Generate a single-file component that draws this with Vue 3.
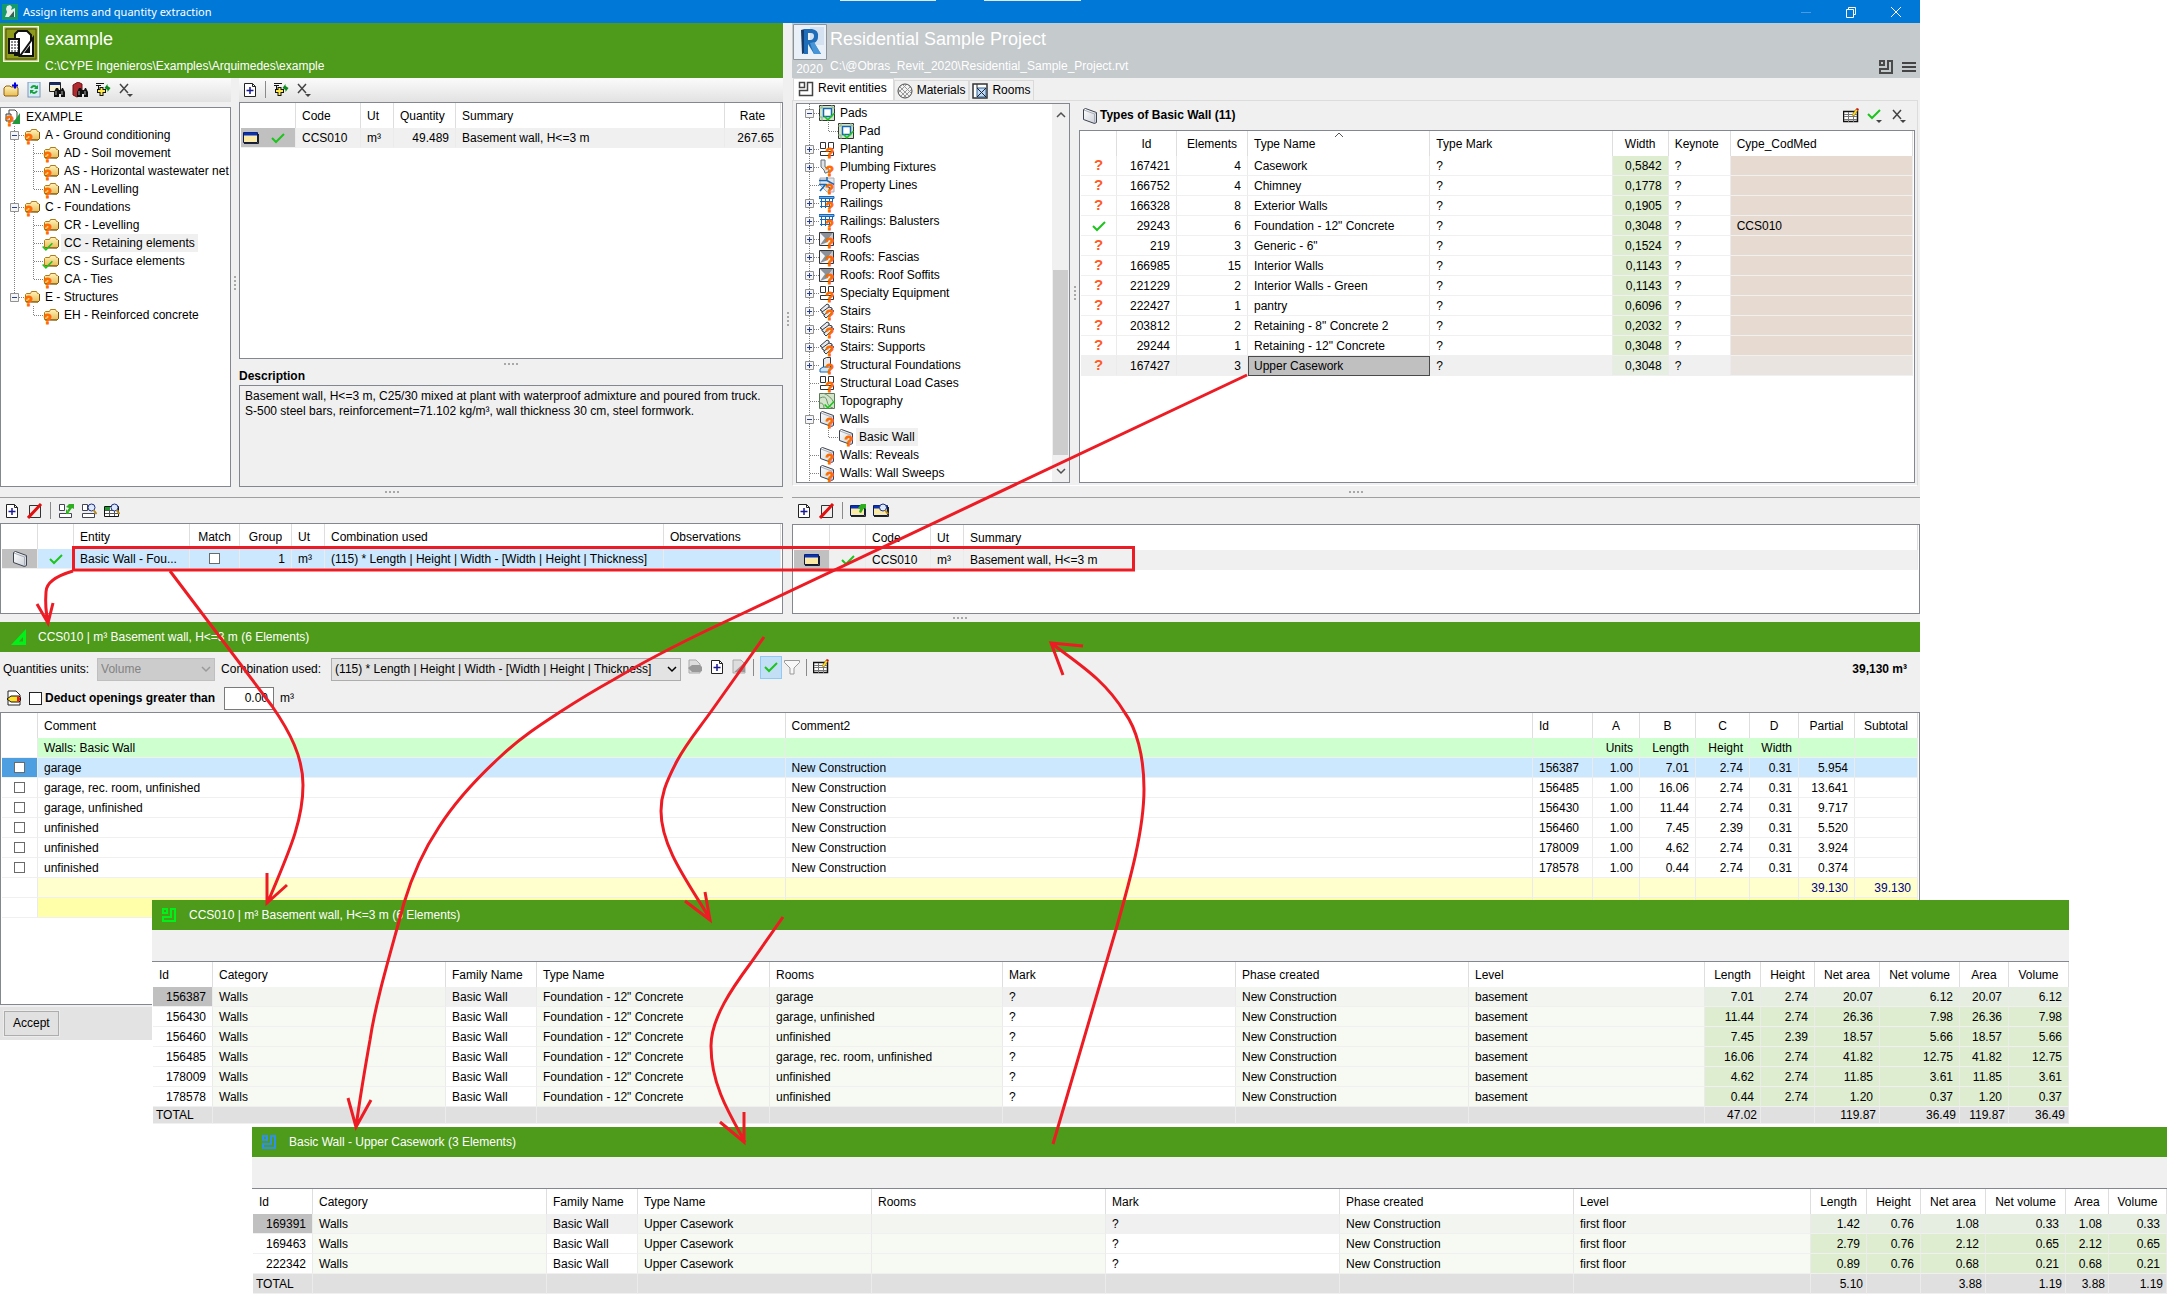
<template>
  <div class="desktop">
    <!-- icon sheet -->
    <svg class="icon-sheet" aria-hidden="true">
      <defs>
        <linearGradient id="folder-fill" x1="0" y1="0" x2="0" y2="1">
          <stop offset="0" stop-color="#fff3b8" />
          <stop offset="1" stop-color="#e8bc55" />
        </linearGradient>
        <linearGradient id="wall-fill" x1="0" y1="0" x2="1" y2="1">
          <stop offset="0" stop-color="#ffffff" />
          <stop offset="1" stop-color="#c9ced6" />
        </linearGradient>
        <symbol id="i-folder" viewBox="0 0 16 16">
          <path d="M1.500 12.500v-7l1-1h4l1-2h5l1 2h1l1 1v6l-1.500 1.500z" fill="url(#folder-fill)" stroke="#b07a18" />
          <path d="M2 13h12l1.500-1.500V5" fill="none" stroke="#7a5208" />
        </symbol>
        <symbol id="i-badge-q" viewBox="0 0 16 16">
          <text x="3" y="15" class="badge-text">?</text>
        </symbol>
        <symbol id="i-tick" viewBox="0 0 16 16">
          <path d="M2 8l4 4 8-8" fill="none" stroke="#1dc41d" stroke-width="2" />
        </symbol>
        <symbol id="i-folder-new" viewBox="0 0 16 16">
          <path d="M1 13V6l2-2h4l1 1h6l1 1v7l-1 1H2z" fill="url(#folder-fill)" stroke="#8f5f0c" />
          <path d="M9 3.500h6M12 .5v6" stroke="#0000e0" stroke-width="2" />
        </symbol>
        <symbol id="i-refresh" viewBox="0 0 16 16">
          <rect x="2" y="0" width="12" height="15" fill="#d8ecf8" stroke="#7b98b8" />
          <path d="M5 6q3-4 6 0M11 9q-3 4-6 0" fill="none" stroke="#14a03a" stroke-width="2" />
          <path d="M12 3v4H8zM4 12V8h4z" fill="#14a03a" />
        </symbol>
        <symbol id="i-find-item" viewBox="0 0 16 16">
          <path d="M.5.500h11v9H.5z" fill="#f4f0d0" stroke="#222" />
          <path d="M1 2h10" stroke="#0b2a8a" stroke-width="2" />
          <path d="M5 15v-5l2-4h2l1 2h2l1-2h1l2 4v5h-4v-3h-2v3z" fill="#111" />
          <path d="M7 9v4M13 9v4" stroke="#aaa" />
        </symbol>
        <symbol id="i-find-book" viewBox="0 0 16 16">
          <path d="M1 3l5-3 4 2v10l-5 3-4-2z" fill="#b02a30" stroke="#701015" />
          <path d="M5 15v-5l2-4h2l1 2h2l1-2h1l2 4v5h-4v-3h-2v3z" fill="#111" />
          <path d="M7 9v4M13 9v4" stroke="#aaa" />
        </symbol>
        <symbol id="i-insert" viewBox="0 0 16 16">
          <path d="M1 1.500h8M1 3.500h5M3.500 4v3" stroke="#111" />
          <path d="M2 9h9M6.500 5v9" stroke="#111" stroke-width="4" />
          <path d="M3 9h7M6.500 6v7" stroke="#ffe84a" stroke-width="2" />
          <path d="M9.500 6l3-4v2l3 2-3 4v-2z" fill="#0a8a1a" />
        </symbol>
        <symbol id="i-cross-menu" viewBox="0 0 16 16">
          <path d="M2 2l8 9M10 2l-8 9" stroke="#444" stroke-width="1.500" />
          <path d="M9 12h6l-3 3z" fill="#444" />
        </symbol>
        <symbol id="i-tick-menu" viewBox="0 0 16 16">
          <path d="M1 6l4 4 8-8" fill="none" stroke="#1dc41d" stroke-width="2" />
          <path d="M9 12h6l-3 3z" fill="#444" />
        </symbol>
        <symbol id="i-doc-new" viewBox="0 0 16 16">
          <path d="M2.500 1.500h8l3 3v10h-11z" fill="#fff" stroke="#222" />
          <path d="M10.500 1.500v3h3" fill="none" stroke="#222" />
          <path d="M4.500 8.500h7M8 5v7" stroke="#1a1a90" stroke-width="1.500" />
        </symbol>
        <symbol id="i-doc-off" viewBox="0 0 16 16">
          <path d="M2.500 2.500h11v12h-11z" fill="#eee" stroke="#333" />
          <path d="M1 15L14 1" stroke="#e01010" stroke-width="3" />
        </symbol>
        <symbol id="i-doc-grey" viewBox="0 0 16 16">
          <path d="M2 1h8l4 4v9H2z" fill="#ddd" stroke="#aaa" />
          <path d="M1 15L14 3v10H3z" fill="#999" />
        </symbol>
        <symbol id="i-pencil-grey" viewBox="0 0 16 16">
          <path d="M2 1h7l4 4v9H2z" fill="#ddd" stroke="#aaa" />
          <path d="M1 9l4-3h8l2 2v4l-2 1H5z" fill="#999" />
        </symbol>
        <symbol id="i-blocks" viewBox="0 0 16 16">
          <path d="M1.500 1.500h5v6h-5zM9.500 1.500h5v6h-5zM1.500 10.500h13v4h-13z" fill="#fff" stroke="#333" />
        </symbol>
        <symbol id="i-blocks-sync" viewBox="0 0 16 16">
          <path d="M1.500 1.500h5v6h-5zM1.500 10.500h12v4h-12z" fill="#fff" stroke="#445" />
          <path d="M8 4l3-3h5v5l-2-1-3 4-2-1 2-3zM8 6v5h4" fill="#2fae1f" />
        </symbol>
        <symbol id="i-blocks-find" viewBox="0 0 16 16">
          <path d="M1.500 1.500h5v6h-5zM1.500 10.500h12v4h-12z" fill="#fff" stroke="#445" />
          <circle cx="10.500" cy="4.500" r="3.500" fill="#dce9ff" stroke="#1d2f80" />
          <path d="M12.500 7l3 4" stroke="#b58a20" stroke-width="2" />
        </symbol>
        <symbol id="i-grid-find" viewBox="0 0 16 16">
          <path d="M.5 3.500h14v10H.5z" fill="#fff" stroke="#111" />
          <path d="M1 7.500h14M1 10.500h14M5.500 4v9M10.500 4v9" stroke="#555" />
          <path d="M1 4h5v3H1z" fill="#1a9a2a" />
          <circle cx="10.500" cy="4.500" r="3.500" fill="#dce9ff" stroke="#1d2f80" />
          <path d="M12.500 7l3 4" stroke="#b58a20" stroke-width="2" />
        </symbol>
        <symbol id="i-item" viewBox="0 0 16 16">
          <path d="M.5 2.500h14v10H.5z" fill="#fbe9a6" stroke="#0a1a50" />
          <path d="M1 4h13" stroke="#0a32b8" stroke-width="3" />
          <path d="M1 13.500h14.500V4" fill="none" stroke="#222" />
        </symbol>
        <symbol id="i-item-sync" viewBox="0 0 16 16">
          <use href="#i-item" />
          <path d="M8 5l3-4h5v5l-2-1-3 5-2-1 1-3z" fill="#2fae1f" />
        </symbol>
        <symbol id="i-item-find" viewBox="0 0 16 16">
          <use href="#i-item" />
          <circle cx="10" cy="4.500" r="3.500" fill="#dce9ff" stroke="#1d2f80" />
          <path d="M12 7l3 4" stroke="#b58a20" stroke-width="2" />
        </symbol>
        <symbol id="i-wall" viewBox="0 0 16 16">
          <path d="M1.500 1.500l2-1 11 4v10l-2 1-11-4z" fill="url(#wall-fill)" stroke="#3c4350" />
          <path d="M2 2l10.500 4 1.500-1M12.500 6v9" fill="none" stroke="#a8aeb8" />
        </symbol>
        <symbol id="i-pad" viewBox="0 0 16 16">
          <path d="M.5.500h15v15H.5z" fill="#cfe6c8" stroke="#333" />
          <path d="M3 0v3H0M13 0q-1 3 3 3M0 12h3v4" fill="none" stroke="#86b07e" />
          <path d="M4.500 3.500h8v8h-8z" fill="#fff" stroke="#1667b5" stroke-width="1.500" />
        </symbol>
        <symbol id="i-plumbing" viewBox="0 0 16 16">
          <path d="M2 1h4v7l4 2q1 3-3 4H6L5 11 2 8z" fill="#dfe2e6" stroke="#666c76" />
        </symbol>
        <symbol id="i-property" viewBox="0 0 16 16">
          <path d="M1 1h14v14H8L1 8z" fill="#e4e6ea" stroke="#a8adb5" />
          <path d="M0 3.500h8l7 4M0 7.500h7l5 5M8 0v4M6 8L1 14" fill="none" stroke="#1667b5" stroke-width="1.500" />
        </symbol>
        <symbol id="i-railing" viewBox="0 0 16 16">
          <path d="M0 1.500h15v2H0z" fill="#6fb0e8" stroke="#1667b5" />
          <path d="M1 6.500h13M1 11.500h11M2.500 4v9M6.500 4v9M10.500 4v9M13.500 4v4" fill="none" stroke="#1667b5" />
        </symbol>
        <symbol id="i-roof" viewBox="0 0 16 16">
          <path d="M.5 1.500h14v13H.5z" fill="#f5f6f8" stroke="#333" />
          <path d="M1 2l5 5h4l4-5zM1 14l5-7h3v4z" fill="#8b919b" />
          <path d="M14 2l-4 5 1 4 3 3z" fill="#c3c8d0" />
        </symbol>
        <symbol id="i-stairs" viewBox="0 0 16 16">
          <path d="M1 7l7-6 2 1v2l3 1v2l2 1-8 7-2-2v-2l-2-1v-2z" fill="#e8eaee" stroke="#333a45" />
          <path d="M3 9l7-5M5 12l8-6" stroke="#333a45" />
        </symbol>
        <symbol id="i-foundation" viewBox="0 0 16 16">
          <path d="M4.500 12V2l3-1.500h4V10" fill="#e8eaee" stroke="#333a45" />
          <path d="M1 12l3-2h9l-3 5H1z" fill="#cfe4f6" stroke="#1667b5" />
        </symbol>
        <symbol id="i-topo" viewBox="0 0 16 16">
          <path d="M.5.500h15v15H.5z" fill="#d3e6cc" stroke="#5d7a58" />
          <path d="M1 5q6-3 7 3t6 7M4 0q8 3 11 10M1 10q4 0 4 5" fill="none" stroke="#6f9168" />
        </symbol>
        <symbol id="i-entities" viewBox="0 0 16 16">
          <path d="M1.500 1.500h5v5h-5zM9.500 1.500h5v13h-13v-5h8z" fill="#fff" stroke="#444" stroke-width="1.500" />
        </symbol>
        <symbol id="i-material" viewBox="0 0 16 16">
          <circle cx="8" cy="8" r="7" fill="#f2f2f2" stroke="#444" />
          <path d="M3 4l9 9M6 2l8 8M2 7l7 7M4 13l9-9M2 9l7-7M7 14l7-7" stroke="#999" />
        </symbol>
        <symbol id="i-room" viewBox="0 0 16 16">
          <path d="M1 1h14v14H1z" fill="#fff" stroke="#333" stroke-width="1.500" />
          <path d="M5 5h9v9H5z" fill="#bcd9f5" stroke="#35618c" />
          <path d="M5 5l9 9M14 5l-9 9" stroke="#223" />
          <path d="M5 1v4" stroke="#333" />
        </symbol>
        <symbol id="i-plan" viewBox="0 0 16 16">
          <path d="M2 2h4v4H2zM10 2h4v12H2V10h8z" fill="none" stroke="currentColor" stroke-width="2" />
        </symbol>
        <symbol id="i-menu" viewBox="0 0 16 16">
          <path d="M1 4h14M1 8h14M1 12h14" stroke="#444" stroke-width="2" />
        </symbol>
        <symbol id="i-grid-edit" viewBox="0 0 16 16">
          <path d="M.5 3.500h14v10H.5z" fill="#fff" stroke="#111" stroke-width="1.500" />
          <path d="M1 6.500h13M1 8.500h13M1 11.500h13M5.500 4v10M10.500 4v10" stroke="#777" />
          <path d="M9 7l4-6 2 1-4 6z" fill="#ffe02a" stroke="#7a5a00" stroke-width=".5" />
          <path d="M13 1l1-1 2 1-1 2z" fill="#d01010" />
        </symbol>
        <symbol id="i-funnel" viewBox="0 0 16 16">
          <path d="M.5 1.500h15v2L10 9v6H6V9L.5 3.500z" fill="#f8f8f8" stroke="#999" />
        </symbol>
        <symbol id="i-pencil-doc" viewBox="0 0 16 16">
          <path d="M2 1h8l4 4v10H2z" fill="#fff" stroke="#222" />
          <path d="M1 9l4-3h8l1.500 1.500v3L13 12H5z" fill="#ffe02a" stroke="#111" />
          <path d="M11 6.500h2l1 1.500v2l-1 1.500h-2z" fill="#e02020" />
        </symbol>
        <symbol id="i-triangle" viewBox="0 0 16 16">
          <path fill-rule="evenodd" d="M0 16L15 0v16zM8 12.500h4V8z" fill="#00f01a" />
        </symbol>
        <symbol id="i-project" viewBox="0 0 16 16">
          <path d="M4 1h6l2 2v9H4z" fill="#fff" stroke="#444" />
          <path d="M1 5h5v7H1z" fill="#ddd" stroke="#444" />
          <path d="M7 15L15 4v11z" fill="#229a3c" />
        </symbol>
        <symbol id="i-chevron" viewBox="0 0 16 16">
          <path d="M4 6l4 4 4-4" fill="none" stroke="currentColor" stroke-width="1.500" />
        </symbol>
      </defs>
    </svg>

    <main class="main-window">
      <header class="title-bar">
        <svg class="app-icon" viewBox="0 0 16 16" aria-hidden="true">
          <path d="M0 0h16v16H0z" fill="#159a6c" />
          <path d="M5 2l3-1 2 2-1 3 4-2v9H3l2-5-1-3z" fill="#e8efe9" />
          <path d="M7 13l5-6v6z" fill="#3d5d50" />
        </svg>
        <span class="title-text">Assign items and quantity extraction</span>
        <button class="win-btn" aria-label="Minimize">
          <svg viewBox="0 0 12 12"><path d="M1 6.500h10" stroke="#4a9be2" /></svg>
        </button>
        <button class="win-btn" aria-label="Restore">
          <svg viewBox="0 0 12 12"><path d="M1.500 3.500h7v8h-7zM3.500 3V1.500h7v7H9" fill="none" stroke="#fff" /></svg>
        </button>
        <button class="win-btn" aria-label="Close">
          <svg viewBox="0 0 12 12"><path d="M1 1l10 10M11 1L1 11" stroke="#fff" /></svg>
        </button>
      </header>

      <div class="workspace">
        <!-- bill of quantities side -->
        <section class="side">
          <header class="side-header green">
            <svg class="job-logo" viewBox="0 0 36 36" aria-hidden="true">
              <path d="M.5.500h35v35H.5z" fill="#8d9a1c" stroke="#f2f2e0" stroke-width="2" />
              <path d="M3 3h30v30H3z" fill="none" stroke="#4b520c" />
              <path d="M12 8l3-3h9l4 4v20H12z" fill="#fff" stroke="#111" stroke-width="2" />
              <path d="M6 13h10v14H6z" fill="#fff" stroke="#111" stroke-width="2" />
              <path d="M8 16h7M8 19h7M8 22h7M8 25h7" stroke="#111" stroke-dasharray="2 1" />
              <path fill-rule="evenodd" d="M17 30L30 12v18zM23 26h3v-4z" fill="#fff" stroke="#111" stroke-width="2" />
            </svg>
            <div class="side-title">
              <h1>example</h1>
              <p>C:\CYPE Ingenieros\Examples\Arquimedes\example</p>
            </div>
          </header>

          <div class="job-panels">
            <div class="tree-column">
              <div class="toolbar shaded">
                <button v-for="b in treeTools" :key="b.icon" :aria-label="b.label">
                  <svg class="icon"><use :href="'#i-' + b.icon" /></svg>
                </button>
              </div>
              <ul class="tree job-tree">
                <li v-for="node in jobTree" :key="node.text">
                  <svg v-for="(g, i) in node.guides" :key="i" class="guide" viewBox="0 0 19 18">
                    <path :d="guidePaths[g]" class="dots" />
                    <g v-if="g.startsWith('open')">
                      <path d="M5.500 5.500h8v8h-8z" fill="#f5f5f5" stroke="#919191" />
                      <path d="M7 9.500h5" stroke="#2b3f8f" />
                    </g>
                  </svg>
                  <span class="tree-icon">
                    <svg class="icon"><use :href="'#i-' + node.icon" /></svg>
                    <svg class="badge left"><use :href="node.ok ? '#i-tick' : '#i-badge-q'" /></svg>
                  </span>
                  <span class="tree-label" :class="{ current: node.current }">{{ node.text }}</span>
                </li>
              </ul>
            </div>

            <div class="v-split narrow"><i class="grip vertical"></i></div>

            <div class="list-column">
              <div class="toolbar shaded">
                <button aria-label="New item"><svg class="icon"><use href="#i-doc-new" /></svg></button>
                <i class="sep"></i>
                <button aria-label="Insert"><svg class="icon"><use href="#i-insert" /></svg></button>
                <button aria-label="Remove"><svg class="icon"><use href="#i-cross-menu" /></svg></button>
              </div>
              <div class="box items-box">
                <table class="grid">
                  <colgroup>
                    <col v-for="(w, i) in [55, 65, 33, 62, 0, 56]" :key="i" :style="colWidth(w)" />
                  </colgroup>
                  <thead>
                    <tr><th></th><th>Code</th><th>Ut</th><th>Quantity</th><th>Summary</th><th class="mid">Rate</th></tr>
                  </thead>
                  <tbody>
                    <tr class="current">
                      <td class="gutter pair">
                        <svg class="icon"><use href="#i-item" /></svg>
                        <svg class="icon"><use href="#i-tick" /></svg>
                      </td>
                      <td>CCS010</td><td>m³</td><td class="num">49.489</td><td>Basement wall, H&lt;=3 m</td><td class="num">267.65</td>
                    </tr>
                  </tbody>
                </table>
              </div>
              <div class="h-split"><i class="grip"></i></div>
              <label class="desc-label" for="description">Description</label>
              <textarea id="description" class="description" readonly :value="description"></textarea>
            </div>
          </div>

          <div class="h-split lower"><i class="grip"></i></div>

          <div class="toolbar lined">
            <button aria-label="New entity"><svg class="icon"><use href="#i-doc-new" /></svg></button>
            <button aria-label="Delete entity"><svg class="icon"><use href="#i-doc-off" /></svg></button>
            <i class="sep"></i>
            <button aria-label="Update"><svg class="icon"><use href="#i-blocks-sync" /></svg></button>
            <button aria-label="View elements"><svg class="icon"><use href="#i-blocks-find" /></svg></button>
            <button aria-label="View quantities"><svg class="icon"><use href="#i-grid-find" /></svg></button>
          </div>
          <div class="box link-box">
            <table class="grid">
              <colgroup>
                <col v-for="(w, i) in [36, 36, 116, 50, 52, 33, 339, 0]" :key="i" :style="colWidth(w)" />
              </colgroup>
              <thead>
                <tr>
                  <th></th><th></th><th>Entity</th><th class="mid">Match</th><th class="mid">Group</th><th>Ut</th>
                  <th>Combination used</th><th>Observations</th>
                </tr>
              </thead>
              <tbody>
                <tr class="selected">
                  <td class="gutter"><svg class="icon"><use href="#i-wall" /></svg></td>
                  <td class="mid"><svg class="icon"><use href="#i-tick" /></svg></td>
                  <td>Basic Wall - Fou...</td>
                  <td class="mid"><input type="checkbox" aria-label="Match" /></td>
                  <td class="num">1</td>
                  <td>m³</td>
                  <td>{{ combination }}</td>
                  <td></td>
                </tr>
              </tbody>
            </table>
          </div>
        </section>

        <div class="v-split"><i class="grip vertical"></i></div>

        <!-- Revit model side -->
        <section class="side">
          <header class="side-header grey">
            <div class="revit-logo">
              <svg viewBox="0 0 34 36" aria-hidden="true">
                <path d="M.5.500h33v35H.5z" fill="#e9f0f8" stroke="#8c9296" />
                <path d="M17 3h14v18H17z" fill="#d3e1f0" />
                <path d="M8 6l4-1v24l-3 1z" fill="#133c6c" />
                <path fill-rule="evenodd" d="M11 5h8q7 1 6 8 0 4-4 6l7 11h-7l-6-10v10h-4zM15 9v7h3q3-1 3-4t-3-3z" fill="#1f6cb8" />
                <path d="M17 19l4-1 7 12h-7z" fill="#4795d6" />
              </svg>
              <span>2020</span>
            </div>
            <div class="side-title">
              <h1>Residential Sample Project</h1>
              <p>C:\@Obras_Revit_2020\Residential_Sample_Project.rvt</p>
            </div>
            <div class="header-tools">
              <button aria-label="Floor plan"><svg class="icon"><use href="#i-plan" /></svg></button>
              <button aria-label="Menu"><svg class="icon"><use href="#i-menu" /></svg></button>
            </div>
          </header>

          <nav class="tabs">
            <button v-for="(t, i) in tabs" :key="t.text" :class="{ active: i === 0 }">
              <svg class="icon"><use :href="'#i-' + t.icon" /></svg>{{ t.text }}
            </button>
          </nav>

          <div class="tab-page">
            <div class="entity-box">
              <ul class="tree entity-tree">
                <li v-for="node in entityTree" :key="node.text">
                  <svg v-for="(g, i) in node.guides" :key="i" class="guide" viewBox="0 0 19 18">
                    <path :d="guidePaths[g]" class="dots" />
                    <g v-if="g.startsWith('open') || g === 'closed'">
                      <path d="M5.500 5.500h8v8h-8z" fill="#f5f5f5" stroke="#919191" />
                      <path :d="g === 'closed' ? 'M7 9.500h5M9.500 7v5' : 'M7 9.500h5'" stroke="#2b3f8f" />
                    </g>
                  </svg>
                  <span class="tree-icon">
                    <svg class="icon"><use :href="'#i-' + node.icon" /></svg>
                    <svg class="badge right"><use :href="node.ok ? '#i-tick' : '#i-badge-q'" /></svg>
                  </span>
                  <span class="tree-label" :class="{ current: node.current }">{{ node.text }}</span>
                </li>
              </ul>
              <div class="scrollbar">
                <svg class="icon flip"><use href="#i-chevron" /></svg>
                <i class="thumb"></i>
                <svg class="icon"><use href="#i-chevron" /></svg>
              </div>
            </div>

            <div class="v-split"><i class="grip vertical"></i></div>

            <div class="types-column">
              <div class="types-header">
                <svg class="icon"><use href="#i-wall" /></svg>
                <h2>Types of Basic Wall (11)</h2>
                <button aria-label="Edit table"><svg class="icon"><use href="#i-grid-edit" /></svg></button>
                <button aria-label="Assign"><svg class="icon"><use href="#i-tick-menu" /></svg></button>
                <button aria-label="Remove"><svg class="icon"><use href="#i-cross-menu" /></svg></button>
              </div>
              <div class="box types-box">
                <table class="grid">
                  <colgroup>
                    <col v-for="(w, i) in [36, 60, 71, 0, 0, 56, 62, 0]" :key="i" :style="colWidth(w)" />
                  </colgroup>
                  <thead>
                    <tr>
                      <th></th><th class="mid">Id</th><th class="mid">Elements</th><th class="sorted">Type Name</th>
                      <th>Type Mark</th><th class="mid">Width</th><th>Keynote</th><th>Cype_CodMed</th>
                    </tr>
                  </thead>
                  <tbody>
                    <tr v-for="t in wallTypes" :key="t.id" :class="{ current: t.current }">
                      <td class="mid">
                        <svg v-if="t.code" class="icon"><use href="#i-tick" /></svg>
                        <b v-else class="pending">?</b>
                      </td>
                      <td class="num">{{ t.id }}</td>
                      <td class="num">{{ t.elements }}</td>
                      <td :class="{ focused: t.current }">{{ t.name }}</td>
                      <td>?</td>
                      <td class="num strong-green">{{ t.width }}</td>
                      <td>?</td>
                      <td class="pink">{{ t.code }}</td>
                    </tr>
                  </tbody>
                </table>
              </div>
            </div>
          </div>

          <div class="h-split lower right"><i class="grip"></i></div>

          <div class="toolbar lined">
            <button aria-label="New item"><svg class="icon"><use href="#i-doc-new" /></svg></button>
            <button aria-label="Delete item"><svg class="icon"><use href="#i-doc-off" /></svg></button>
            <i class="sep"></i>
            <button aria-label="Update item"><svg class="icon"><use href="#i-item-sync" /></svg></button>
            <button aria-label="View item"><svg class="icon"><use href="#i-item-find" /></svg></button>
          </div>
          <div class="box code-box">
            <table class="grid">
              <colgroup>
                <col v-for="(w, i) in [36, 36, 65, 33, 0]" :key="i" :style="colWidth(w)" />
              </colgroup>
              <thead>
                <tr><th></th><th></th><th>Code</th><th>Ut</th><th>Summary</th></tr>
              </thead>
              <tbody>
                <tr class="current">
                  <td class="gutter"><svg class="icon"><use href="#i-item" /></svg></td>
                  <td class="mid"><svg class="icon"><use href="#i-tick" /></svg></td>
                  <td>CCS010</td><td>m³</td><td>Basement wall, H&lt;=3 m</td>
                </tr>
              </tbody>
            </table>
          </div>
        </section>
      </div>

      <div class="h-split bottom"><i class="grip"></i></div>

      <!-- quantities of the selected item -->
      <header class="band">
        <svg class="icon"><use href="#i-triangle" /></svg>
        <h2>CCS010 | m³ Basement wall, H&lt;=3 m (6 Elements)</h2>
      </header>

      <div class="options">
        <div class="option-row">
          <label for="units">Quantities units:</label>
          <span class="drop units disabled">
            <select id="units" disabled><option>Volume</option></select>
            <svg class="icon"><use href="#i-chevron" /></svg>
          </span>
          <label for="combination">Combination used:</label>
          <span class="drop combination">
            <select id="combination"><option>{{ combination }}</option></select>
            <svg class="icon"><use href="#i-chevron" /></svg>
          </span>
          <div class="toolbar plain">
            <button aria-label="Edit"><svg class="icon"><use href="#i-pencil-grey" /></svg></button>
            <button aria-label="New"><svg class="icon"><use href="#i-doc-new" /></svg></button>
            <button aria-label="Delete"><svg class="icon"><use href="#i-doc-grey" /></svg></button>
            <i class="sep"></i>
            <button class="pressed" aria-label="Valid"><svg class="icon"><use href="#i-tick" /></svg></button>
            <button aria-label="Filter"><svg class="icon"><use href="#i-funnel" /></svg></button>
            <i class="sep"></i>
            <button aria-label="Edit table"><svg class="icon"><use href="#i-grid-edit" /></svg></button>
          </div>
          <strong class="total">39,130 m³</strong>
        </div>
        <div class="option-row deduct">
          <svg class="icon"><use href="#i-pencil-doc" /></svg>
          <input id="deduct" type="checkbox" class="big" />
          <label for="deduct"><strong>Deduct openings greater than</strong></label>
          <input class="amount" type="text" value="0.00" aria-label="Minimum opening" />
          <span>m³</span>
        </div>
      </div>

      <div class="box quantities-box">
        <table class="grid">
          <colgroup>
            <col v-for="(w, i) in [36, 0, 0, 60, 47, 56, 54, 49, 56, 63]" :key="i" :style="colWidth(w)" />
          </colgroup>
          <thead>
            <tr>
              <th></th><th>Comment</th><th>Comment2</th><th>Id</th><th class="mid">A</th><th class="mid">B</th>
              <th class="mid">C</th><th class="mid">D</th><th class="mid">Partial</th><th class="mid">Subtotal</th>
            </tr>
          </thead>
          <tbody>
            <tr class="group">
              <td></td><td>Walls: Basic Wall</td><td></td><td></td>
              <td class="num">Units</td><td class="num">Length</td><td class="num">Height</td><td class="num">Width</td>
              <td></td><td></td>
            </tr>
            <tr v-for="(q, i) in quantities" :key="q.id" :class="{ selected: i === 0 }">
              <td class="mid check"><input type="checkbox" :aria-label="'Select ' + q.id" /></td>
              <td>{{ q.comment }}</td>
              <td>New Construction</td>
              <td>{{ q.id }}</td>
              <td class="num">1.00</td>
              <td class="num">{{ q.length }}</td>
              <td class="num">{{ q.height }}</td>
              <td class="num">0.31</td>
              <td class="num">{{ q.partial }}</td>
              <td></td>
            </tr>
            <tr class="sum">
              <td></td><td></td><td></td><td></td><td></td><td></td><td></td><td></td>
              <td class="num">39.130</td><td class="num">39.130</td>
            </tr>
            <tr class="sum total-sum">
              <td></td><td></td><td></td><td></td><td></td><td></td><td></td><td></td><td></td><td></td>
            </tr>
          </tbody>
        </table>
      </div>

      <footer class="footer">
        <button class="accept">Accept</button>
      </footer>
    </main>

    <!-- element listings -->
    <section v-for="p in popups" :key="p.name" class="popup" :class="p.name">
      <header class="band">
        <svg class="icon"><use href="#i-plan" /></svg>
        <h2>{{ p.title }}</h2>
      </header>
      <div class="popup-bar"></div>
      <div class="popup-list">
        <table class="grid">
          <colgroup>
            <col v-for="(w, i) in p.widths" :key="i" :style="colWidth(w)" />
          </colgroup>
          <thead>
            <tr>
              <th v-for="(c, i) in elementColumns" :key="c" :class="{ mid: i > 7 }">{{ c }}</th>
            </tr>
          </thead>
          <tbody>
            <tr v-for="(row, r) in p.rows" :key="row[0]" :class="{ current: r === 0 }">
              <td v-for="(cell, i) in row" :key="i" :class="elementTone(i, r)">{{ cell }}</td>
            </tr>
          </tbody>
          <tfoot>
            <tr>
              <td v-for="(cell, i) in p.totals" :key="i" :class="{ num: i > 7 }">{{ cell }}</td>
            </tr>
          </tfoot>
        </table>
      </div>
    </section>

    <!-- hand drawn links between the panels -->
    <svg class="marks" viewBox="0 0 2170 1294" preserveAspectRatio="none" aria-hidden="true">
      <path d="M73.500 547.500H1133.500V570H73.500z" />
      <path d="M73 571C56 576 46 583 46 592C45 605 46 613 48 622M37 604L48 623L53 603" />
      <path d="M170 571L272 706C290 732 303 757 303 785C303 825 285 860 268 902M267 873V903L287 885" />
      <path
        d="M1247 375L714 627C670 648 640 664 613 680C595 690 577 701 560 712C540 725 520 738 500 757C475 780 455 802 439 827C425 848 413 873 404 903C390 955 376 1000 370 1040C362 1085 359 1105 356 1127M348 1098L356 1127L371 1100"
      />
      <path d="M764 637L710 713C697 731 686 744 677 761C665 784 661 796 661 811C661 848 690 885 710 919M705 892L710 920L685 901" />
      <path d="M783 917L750 964C733 987 711 1018 711 1046C711 1085 730 1115 745 1142M744 1112V1142L720 1122" />
      <path d="M1053 1144L1117 926C1130 880 1144 830 1144 789C1144 755 1136 728 1125 713C1105 680 1080 665 1051 643M1083 646L1051 643L1063 675" />
    </svg>
  </div>
</template>

<script setup>
const combination = "(115) * Length | Height | Width - [Width | Height | Thickness]";

const description =
  "Basement wall, H<=3 m, C25/30 mixed at plant with waterproof admixture and poured from truck.\n" +
  "S-500 steel bars, reinforcement=71.102 kg/m³, wall thickness 30 cm, steel formwork.";

const treeTools = [
  { icon: "folder-new", label: "New chapter" },
  { icon: "refresh", label: "Refresh" },
  { icon: "find-item", label: "Find item" },
  { icon: "find-book", label: "Find in database" },
  { icon: "insert", label: "Insert" },
  { icon: "cross-menu", label: "Remove" },
];

const tabs = [
  { icon: "entities", text: "Revit entities" },
  { icon: "material", text: "Materials" },
  { icon: "room", text: "Rooms" },
];

// dotted connectors, one 19x18 cell per tree level
const guidePaths = {
  line: "M9.500 0v18",
  tee: "M9.500 0v18M10 9.500h9",
  end: "M9.500 0v9M10 9.500h9",
  open: "M9.500 0v18M10 9.500h9",
  openLast: "M9.500 0v9M10 9.500h9",
  closed: "M9.500 0v18M10 9.500h9",
  blank: "M0 0",
};

const jobTree = [
  { text: "EXAMPLE", icon: "project", guides: [] },
  { text: "A - Ground conditioning", icon: "folder", guides: ["open"] },
  { text: "AD - Soil movement", icon: "folder", guides: ["line", "tee"] },
  { text: "AS - Horizontal wastewater net", icon: "folder", guides: ["line", "tee"] },
  { text: "AN - Levelling", icon: "folder", guides: ["line", "end"] },
  { text: "C - Foundations", icon: "folder", guides: ["open"] },
  { text: "CR - Levelling", icon: "folder", guides: ["line", "tee"] },
  { text: "CC - Retaining elements", icon: "folder", guides: ["line", "tee"], ok: true, current: true },
  { text: "CS - Surface elements", icon: "folder", guides: ["line", "tee"], ok: true },
  { text: "CA - Ties", icon: "folder", guides: ["line", "end"] },
  { text: "E - Structures", icon: "folder", guides: ["openLast"] },
  { text: "EH - Reinforced concrete", icon: "folder", guides: ["blank", "end"] },
];

const entityTree = [
  { text: "Pads", icon: "pad", guides: ["open"], ok: true },
  { text: "Pad", icon: "pad", guides: ["line", "end"], ok: true },
  { text: "Planting", icon: "blocks", guides: ["closed"] },
  { text: "Plumbing Fixtures", icon: "plumbing", guides: ["closed"] },
  { text: "Property Lines", icon: "property", guides: ["tee"] },
  { text: "Railings", icon: "railing", guides: ["closed"] },
  { text: "Railings: Balusters", icon: "railing", guides: ["closed"] },
  { text: "Roofs", icon: "roof", guides: ["closed"] },
  { text: "Roofs: Fascias", icon: "roof", guides: ["closed"] },
  { text: "Roofs: Roof Soffits", icon: "roof", guides: ["closed"] },
  { text: "Specialty Equipment", icon: "blocks", guides: ["closed"] },
  { text: "Stairs", icon: "stairs", guides: ["closed"] },
  { text: "Stairs: Runs", icon: "stairs", guides: ["closed"] },
  { text: "Stairs: Supports", icon: "stairs", guides: ["closed"] },
  { text: "Structural Foundations", icon: "foundation", guides: ["closed"] },
  { text: "Structural Load Cases", icon: "blocks", guides: ["tee"] },
  { text: "Topography", icon: "topo", guides: ["tee"], ok: true },
  { text: "Walls", icon: "wall", guides: ["open"] },
  { text: "Basic Wall", icon: "wall", guides: ["line", "end"], current: true },
  { text: "Walls: Reveals", icon: "wall", guides: ["tee"] },
  { text: "Walls: Wall Sweeps", icon: "wall", guides: ["tee"] },
];

const wallTypes = [
  { id: "167421", elements: 4, name: "Casework", width: "0,5842" },
  { id: "166752", elements: 4, name: "Chimney", width: "0,1778" },
  { id: "166328", elements: 8, name: "Exterior Walls", width: "0,1905" },
  { id: "29243", elements: 6, name: 'Foundation - 12" Concrete', width: "0,3048", code: "CCS010" },
  { id: "219", elements: 3, name: 'Generic - 6"', width: "0,1524" },
  { id: "166985", elements: 15, name: "Interior Walls", width: "0,1143" },
  { id: "221229", elements: 2, name: "Interior Walls - Green", width: "0,1143" },
  { id: "222427", elements: 1, name: "pantry", width: "0,6096" },
  { id: "203812", elements: 2, name: 'Retaining - 8" Concrete 2', width: "0,2032" },
  { id: "29244", elements: 1, name: 'Retaining - 12" Concrete', width: "0,3048" },
  { id: "167427", elements: 3, name: "Upper Casework", width: "0,3048", current: true },
];

const quantities = [
  { comment: "garage", id: "156387", length: "7.01", height: "2.74", partial: "5.954" },
  { comment: "garage, rec. room, unfinished", id: "156485", length: "16.06", height: "2.74", partial: "13.641" },
  { comment: "garage, unfinished", id: "156430", length: "11.44", height: "2.74", partial: "9.717" },
  { comment: "unfinished", id: "156460", length: "7.45", height: "2.39", partial: "5.520" },
  { comment: "unfinished", id: "178009", length: "4.62", height: "2.74", partial: "3.924" },
  { comment: "unfinished", id: "178578", length: "0.44", height: "2.74", partial: "0.374" },
];

const elementColumns = [
  "Id", "Category", "Family Name", "Type Name", "Rooms", "Mark", "Phase created", "Level",
  "Length", "Height", "Net area", "Net volume", "Area", "Volume",
];

const foundation = (id, room, ...values) => [
  id, "Walls", "Basic Wall", 'Foundation - 12" Concrete', room, "?", "New Construction", "basement", ...values,
];

const casework = (id, ...values) => [
  id, "Walls", "Basic Wall", "Upper Casework", "", "?", "New Construction", "first floor", ...values,
];

const popups = [
  {
    name: "foundation",
    title: "CCS010 | m³ Basement wall, H<=3 m (6 Elements)",
    widths: [60, 233, 91, 233, 233, 233, 233, 0, 56, 54, 65, 80, 49, 60],
    rows: [
      foundation("156387", "garage", "7.01", "2.74", "20.07", "6.12", "20.07", "6.12"),
      foundation("156430", "garage, unfinished", "11.44", "2.74", "26.36", "7.98", "26.36", "7.98"),
      foundation("156460", "unfinished", "7.45", "2.39", "18.57", "5.66", "18.57", "5.66"),
      foundation("156485", "garage, rec. room, unfinished", "16.06", "2.74", "41.82", "12.75", "41.82", "12.75"),
      foundation("178009", "unfinished", "4.62", "2.74", "11.85", "3.61", "11.85", "3.61"),
      foundation("178578", "unfinished", "0.44", "2.74", "1.20", "0.37", "1.20", "0.37"),
    ],
    totals: ["TOTAL", "", "", "", "", "", "", "", "47.02", "", "119.87", "36.49", "119.87", "36.49"],
  },
  {
    name: "casework",
    title: "Basic Wall - Upper Casework (3 Elements)",
    widths: [60, 234, 91, 234, 234, 234, 234, 0, 56, 54, 65, 80, 43, 58],
    rows: [
      casework("169391", "1.42", "0.76", "1.08", "0.33", "1.08", "0.33"),
      casework("169463", "2.79", "0.76", "2.12", "0.65", "2.12", "0.65"),
      casework("222342", "0.89", "0.76", "0.68", "0.21", "0.68", "0.21"),
    ],
    totals: ["TOTAL", "", "", "", "", "", "", "", "5.10", "", "3.88", "1.19", "3.88", "1.19"],
  },
];

// a width of 0 shares whatever is left
const colWidth = (w) => (w ? { width: w + "px" } : {});

const elementTone = (i, r) => ({
  num: i === 0 || i > 7,
  gutter: i === 0 && r === 0,
  "soft-green": [1, 3, 4, 6, 7].includes(i),
  "strong-green": i > 7,
});
</script>

<style>
body {
  margin: 0;
  background: #fff;
}
</style>

<style scoped>
.desktop {
  position: relative;
  min-height: 100vh;
  overflow: hidden;
  background: #fff;
  color: #000;
  font-family: "Liberation Sans", Arial, sans-serif;
  font-size: 12px;
  line-height: 15px;
}

.desktop * {
  box-sizing: border-box;
}

.icon-sheet {
  position: absolute;
  width: 0;
  height: 0;
}

.badge-text {
  font-weight: bold;
  font-size: 17px;
  fill: #ff6a00;
  stroke: #ff6a00;
  stroke-width: 1px;
}

.icon {
  width: 16px;
  height: 16px;
  flex: none;
  display: block;
}

button {
  border: 0;
  padding: 0;
  background: none;
  font: inherit;
  color: inherit;
}

h1,
h2,
p {
  margin: 0;
  font-weight: normal;
}

/* main window */

.main-window {
  display: flex;
  flex-direction: column;
  margin-right: 250px;
  background: #f0f0f0;
}

.title-bar {
  display: flex;
  align-items: center;
  height: 23px;
  padding-left: 2px;
  color: #fff;
  background:
    linear-gradient(#e4e8ee, #e4e8ee) 840px 0 / 96px 1px no-repeat,
    linear-gradient(#e4e8ee, #e4e8ee) 984px 0 / 97px 1px no-repeat,
    #0078d7;
}

.app-icon {
  width: 16px;
  height: 16px;
}

.title-text {
  flex: 1;
  padding-left: 5px;
  font-family: "Noto Sans", "Open Sans", sans-serif;
  font-size: 11px;
}

.win-btn {
  display: flex;
  justify-content: center;
  width: 45px;
}

.win-btn svg {
  width: 12px;
  height: 12px;
}

.win-btn:last-child {
  margin-right: 2px;
}

.workspace {
  display: grid;
  grid-template-columns: minmax(0, 783fr) 9px minmax(0, 1128fr);
}

.side {
  display: flex;
  flex-direction: column;
}

.side-header {
  display: flex;
  height: 55px;
  color: #fff;
}

.side-header.green {
  background: #4e9a1a;
  padding-left: 3px;
  gap: 6px;
}

.side-header.grey {
  background: #c5cacd;
  gap: 3px;
}

.job-logo {
  width: 36px;
  height: 36px;
  margin-top: 3px;
}

.side-title {
  flex: 1;
}

.side-title h1 {
  padding-top: 6px;
  font-size: 18px;
  line-height: 20px;
}

.side-title p {
  padding-top: 10px;
}

.revit-logo {
  display: flex;
  flex-direction: column;
  align-items: center;
  width: 35px;
  padding-top: 1px;
}

.revit-logo svg {
  width: 34px;
  height: 36px;
}

.revit-logo span {
  padding-top: 2px;
}

.header-tools {
  display: flex;
  align-items: flex-end;
  gap: 7px;
  padding: 0 3px 3px 0;
  color: #4a4a4a;
}

.toolbar {
  display: flex;
  align-items: center;
  gap: 7px;
  height: 24px;
  padding-left: 3px;
}

.toolbar.shaded {
  padding-bottom: 1px;
  background: linear-gradient(#fbfbfb, #e2e2e2);
}

.toolbar.lined {
  height: 26px;
  padding-left: 4px;
  border-top: 1px solid #a0a0a0;
}

.sep {
  width: 1px;
  height: 17px;
  background: #8a8a8a;
}

.v-split {
  display: flex;
  align-items: center;
  justify-content: center;
  width: 9px;
}

.v-split.narrow {
  width: 8px;
}

.h-split {
  display: flex;
  align-items: center;
  justify-content: center;
  height: 10px;
}

.grip {
  width: 14px;
  height: 2px;
  background: repeating-linear-gradient(90deg, #a8a8a8 0 2px, transparent 2px 4px);
}

.grip.vertical {
  width: 2px;
  height: 14px;
  background: repeating-linear-gradient(#a8a8a8 0 2px, transparent 2px 4px);
}

.h-split.lower.right {
  height: 11px;
}

.h-split.bottom {
  height: 8px;
}

.box {
  border: 1px solid #828790;
  background: #fff;
  padding: 0 1px;
}

.job-panels {
  display: flex;
  min-height: 409px;
}

.tree-column {
  display: flex;
  flex-direction: column;
  width: 231px;
}

.list-column {
  display: flex;
  flex: 1;
  min-width: 0;
  flex-direction: column;
}

/* trees */

.tree {
  flex: 1;
  margin: 0;
  padding: 0;
  overflow: hidden;
  list-style: none;
  background: #fff;
}

.job-tree {
  margin-top: 5px;
  padding-left: 4px;
  border: 1px solid #828790;
}

.tree li {
  display: flex;
  align-items: center;
  height: 18px;
  white-space: nowrap;
}

.guide {
  flex: none;
  width: 19px;
  height: 18px;
}

.dots {
  fill: none;
  stroke: #808080;
  stroke-dasharray: 1 1;
}

.tree-icon {
  position: relative;
  flex: none;
  width: 16px;
  height: 16px;
}

.badge {
  position: absolute;
  bottom: -2px;
  width: 13px;
  height: 13px;
}

.badge.left {
  left: -2px;
}

.badge.right {
  right: -1px;
}

.tree-label {
  padding: 2px 3px 1px;
  margin-left: 2px;
}

.tree-label.current {
  background: #f0f0f0;
}

.entity-box {
  display: flex;
  width: 274px;
  margin-left: 3px;
  border: 1px solid #828790;
  background: #fff;
}

.entity-tree {
  padding-left: 3px;
}

.scrollbar {
  display: flex;
  flex-direction: column;
  align-items: center;
  width: 17px;
  background: #f0f0f0;
  color: #505050;
  padding: 3px 0;
}

.scrollbar .flip {
  transform: rotate(180deg);
  margin-bottom: auto;
}

.scrollbar .thumb {
  width: 15px;
  height: 185px;
  margin-bottom: 8px;
  background: #cdcdcd;
}

/* tables */

.grid {
  width: 100%;
  table-layout: fixed;
  border-collapse: separate;
  border-spacing: 0;
  background: #fff;
}

.grid th,
.grid td {
  overflow: hidden;
  padding: 1px 6px 0;
  border-right: 1px solid #ebebeb;
  text-align: left;
  font-weight: normal;
  white-space: nowrap;
}

.grid th {
  height: 25px;
  border-right-color: #dedede;
}

.grid td {
  height: 20px;
  border-bottom: 1px solid #f0f0f0;
}

.grid .mid {
  text-align: center;
}

.grid .num {
  text-align: right;
}

.grid td .icon {
  margin: 0 auto;
}

.grid td.mid {
  padding: 0;
}

.grid .soft-green {
  background: #f6faf2;
}

.grid .strong-green {
  background: #deedcf;
}

.grid .pink {
  background: #e6dad1;
}

.grid .current td {
  background: #f0f0f0;
}

.grid .current .soft-green {
  background: #f2f5f0;
}

.grid .current .strong-green {
  background: #e5eee0;
}

.grid .current .pink {
  background: #e9e4e0;
}

.grid .selected td {
  background: #cce8ff;
}

.grid tr .gutter,
.grid .current .gutter,
.grid .selected .gutter {
  background: #c0c0c0;
}

.grid .current .focused {
  border: 1px solid #4a4a4a;
  background: #c0c0c0;
  padding: 0 5px;
}

.grid .pair {
  padding: 0;
}

.grid .pair .icon {
  display: inline-block;
  margin: 0 9px 0 2px;
  vertical-align: middle;
}

.grid .pair .icon:last-child {
  margin-right: 0;
}

.sorted {
  background: url("data:image/svg+xml,%3Csvg xmlns='http://www.w3.org/2000/svg' width='8' height='5'%3E%3Cpath d='M0 4l4-4 4 4' fill='none' stroke='%23555'/%3E%3C/svg%3E") 50% 2px no-repeat;
}

.pending {
  color: #ff5a26;
  font-size: 15px;
}

input[type="checkbox"] {
  appearance: none;
  display: block;
  width: 11px;
  height: 11px;
  margin: 0 auto;
  border: 1px solid #6a6a6a;
  background: #fff;
}

input[type="checkbox"].big {
  width: 13px;
  height: 13px;
  margin: 0 3px 0 7px;
  border-color: #222;
}

.items-box {
  height: 257px;
}

.desc-label {
  padding: 0 0 10px;
  height: 16px;
  font-weight: bold;
}

.description {
  flex: 1;
  margin: 0;
  padding: 3px 5px;
  border: 1px solid #828790;
  border-radius: 0;
  outline: 0;
  resize: none;
  background: #f0f0f0;
  color: #000;
  font: inherit;
  white-space: pre;
  overflow: hidden;
}

.link-box {
  flex: 1;
  min-height: 91px;
}

.code-box {
  flex: 1;
  margin-top: 1px;
}

/* tabs */

.tabs {
  display: flex;
  align-items: flex-end;
  height: 22px;
  padding-left: 1px;
}

.tabs button {
  display: flex;
  align-items: center;
  gap: 4px;
  height: 20px;
  padding: 0 3px 0 2px;
  border: 1px solid #dadada;
  border-bottom: 0;
}

.tabs button.active {
  height: 22px;
  padding: 0 6px 2px 4px;
  background: #fff;
}

.tab-page {
  display: flex;
  margin-right: 2px;
  padding: 2px 2px 2px 0;
  border: 1px solid #dcdcdc;
  border-bottom-color: #fff;
}

.types-column {
  display: flex;
  flex: 1;
  min-width: 0;
  flex-direction: column;
}

.types-header {
  display: flex;
  align-items: center;
  height: 27px;
  padding: 0 8px 2px 3px;
}

.types-header h2 {
  flex: 1;
  padding-left: 2px;
  font-size: 12px;
  font-weight: bold;
}

.types-header button {
  margin-left: 8px;
}

.types-box {
  flex: 1;
}

/* quantities */

.band {
  display: flex;
  align-items: center;
  gap: 10px;
  height: 30px;
  padding-left: 11px;
  background: #4e9a1a;
  color: #fff;
}

.band h2 {
  padding-left: 1px;
  font-size: 12px;
}

.options {
  padding: 5px 13px 2px 3px;
}

.option-row {
  display: flex;
  align-items: center;
  height: 24px;
}

.drop {
  display: flex;
  align-items: center;
  height: 23px;
  border: 1px solid #adadad;
  background: #e3e3e3;
}

.drop select {
  flex: 1;
  min-width: 0;
  appearance: none;
  padding: 0 3px;
  border: 0;
  background: none;
  color: #000;
  font: inherit;
  opacity: 1;
}

.drop.units {
  width: 118px;
  margin: 0 6px 0 8px;
}

.drop.combination {
  width: 350px;
  margin-left: 10px;
}

.drop.disabled {
  border-color: #bfbfbf;
  background: #cccccc;
  color: #9a9a9a;
}

.drop.disabled select {
  color: #838383;
}

.toolbar.plain {
  gap: 6px;
  height: 20px;
  padding-left: 6px;
  align-self: flex-start;
}

.toolbar .pressed {
  padding: 2px 2px 3px;
  border: 1px solid #90c8f6;
  background: #c2dff5;
}

.toolbar .pressed + button {
  margin-left: -4px;
}

.total {
  margin-left: auto;
}

.option-row.deduct {
  height: 29px;
  padding-left: 3px;
  padding-top: 5px;
}

.amount {
  width: 50px;
  height: 23px;
  margin: 0 6px 0 9px;
  padding: 0 5px;
  border: 1px solid #7a7a7a;
  background: #fff;
  font: inherit;
  text-align: right;
}

.quantities-box {
  min-height: 293px;
}

.group td:not(:first-child) {
  background: #ceffce;
}

.grid .selected .check {
  background: #4d9fe2;
}

.grid .sum td {
  color: #000080;
}

.sum td:not(:first-child) {
  background: #ffffce;
}

.total-sum td:not(:first-child) {
  background: #ffffaa;
}

.footer {
  display: flex;
  margin-top: 2px;
  padding: 4px;
  background: #e3e3e3;
}

.accept {
  padding: 4px 8px;
  border: 1px solid #adadad;
  outline: 1px solid #ececec;
  background: #e1e1e1;
}

/* listings over the main window */

.popup {
  position: absolute;
}

.popup.foundation {
  top: 900px;
  left: 152px;
  right: 101px;
}

.popup.casework {
  top: 1127px;
  left: 252px;
  right: 3px;
}

.popup .band {
  padding-left: 9px;
}

.popup .band h2 {
  padding-left: 2px;
}

.foundation .band .icon {
  color: #00f01a;
}

.casework .band .icon {
  color: #2f8fee;
}

.popup-bar {
  height: 32px;
  border-bottom: 1px solid #828790;
  background: #f0f0f0;
}

.popup-list {
  padding-left: 1px;
  background: #fff;
}

.popup tfoot td {
  padding: 1px 3px 0;
  background: #e0e0e0;
}

.foundation tfoot td {
  height: 17px;
}

.marks {
  position: absolute;
  top: 0;
  left: 0;
  width: 100%;
  pointer-events: none;
  fill: none;
  stroke: #ed1c24;
  stroke-width: 3;
}
</style>
